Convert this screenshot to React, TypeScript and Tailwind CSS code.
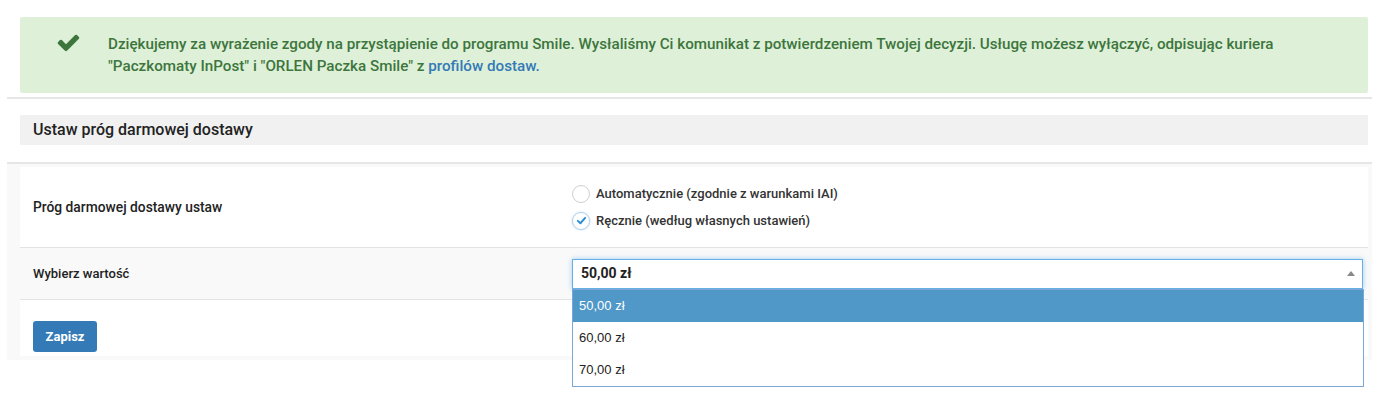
import { useState } from 'react';

const options = ['50,00 zł', '60,00 zł', '70,00 zł'];

function CheckIcon() {
  return (
    <svg viewBox="0 0 1792 1792" className="w-[25px] h-[25px] fill-[#3c763d]">
      <path d="M1671 566q0 40-28 68l-724 724-136 136q-28 28-68 28t-68-28l-136-136-362-362q-28-28-28-68t28-68l136-136q28-28 68-28t68 28l294 295 656-657q28-28 68-28t68 28l136 136q28 28 28 68z" />
    </svg>
  );
}

function Radio({ checked, label }: { checked: boolean; label: string }) {
  return (
    <label className="flex items-center gap-[6px] h-[27px] cursor-pointer">
      <span
        className={
          checked
            ? 'w-[18px] h-[18px] rounded-full border border-[#b9d3ea] bg-white flex items-center justify-center shadow-[0_0_2px_rgba(102,175,233,0.5)]'
            : 'w-[18px] h-[18px] rounded-full border border-[#cfcfcf] bg-white'
        }
      >
        {checked && (
          <svg viewBox="0 0 12 12" className="w-[11px] h-[11px]">
            <path d="M2 6.4 L4.8 9 L10 3.2" fill="none" stroke="#2d8fd5" strokeWidth="2.2" strokeLinecap="round" strokeLinejoin="round" />
          </svg>
        )}
      </span>
      <span className="text-[13px] font-medium text-[#333]">{label}</span>
    </label>
  );
}

export default function App() {
  const [mode, setMode] = useState('manual');
  const [value] = useState(options[0]);

  return (
    <div className="w-[1390px] h-[397px] bg-white font-['Roboto',sans-serif] text-[#333]">
      <div className="w-[1365px] ml-[7px] pt-[17px]">
        {/* success alert */}
        <div className="ml-[13px] w-[1348px] h-[76px] bg-[#dff0d8] rounded-[2px] flex items-start">
          <div className="w-[88px] pl-[36px] pt-[13px]">
            <CheckIcon />
          </div>
          <p className="w-[1180px] pt-[16px] text-[15.2px] leading-[22px] font-medium text-[#3c763d]">
            Dziękujemy za wyrażenie zgody na przystąpienie do programu Smile. Wysłaliśmy Ci komunikat z potwierdzeniem Twojej decyzji. Usługę możesz wyłączyć, odpisując kuriera "Paczkomaty InPost" i "ORLEN Paczka Smile" z{' '}
            <a href="#" className="text-[#337ab7]">profilów dostaw.</a>
          </p>
        </div>

        <div className="mt-[4px] h-[2px] bg-[#e6e6e6]" />

        {/* section header */}
        <div className="mt-[16px] ml-[13px] w-[1348px] h-[30px] bg-[#f1f1f1] flex items-center px-[13px]">
          <h2 className="text-[16px] font-medium text-[#222]">Ustaw próg darmowej dostawy</h2>
        </div>

        {/* form panel */}
        <div className="mt-[17px] border-t-2 border-[#e6e6e6] bg-[#f9f9f9] pl-[13px] pr-[4px] pt-[3px] pb-[4px]">
          <div className="h-[81px] bg-white border-b border-[#e3e3e3] grid grid-cols-[552px_1fr] items-center">
            <div className="pl-[13px] text-[13.8px] font-medium text-[#222]">Próg darmowej dostawy ustaw</div>
            <div className="flex flex-col" onClick={() => setMode(mode === 'manual' ? 'auto' : 'manual')}>
              <Radio checked={mode === 'auto'} label="Automatycznie (zgodnie z warunkami IAI)" />
              <Radio checked={mode === 'manual'} label="Ręcznie (według własnych ustawień)" />
            </div>
          </div>

          <div className="h-[52px] border-b border-[#e3e3e3] grid grid-cols-[552px_1fr] items-center">
            <div className="pl-[13px] text-[13px] font-medium text-[#222]">Wybierz wartość</div>
            <div className="relative pr-[5px]">
              <div className="h-[30px] bg-white border border-[#66afe9] shadow-[0_0_5px_rgba(102,175,233,0.6)] flex items-center justify-between pl-[8px] pr-[7px]">
                <span className="text-[14px] font-bold text-[#222]">{value}</span>
                <span className="w-0 h-0 border-l-[4px] border-r-[4px] border-b-[5px] border-l-transparent border-r-transparent border-b-[#888]" />
              </div>
              <ul className="absolute left-0 right-[4px] top-[30px] bg-white border border-[#7aa8d2] z-10 font-['Liberation_Sans',sans-serif]">
                {options.map((o) => (
                  <li
                    key={o}
                    className={
                      o === value
                        ? 'h-[32px] flex items-center px-[6px] text-[13px] bg-[#4f98c8] text-white'
                        : 'h-[32px] flex items-center px-[6px] text-[13px] text-[#222]'
                    }
                  >
                    {o}
                  </li>
                ))}
              </ul>
            </div>
          </div>

          <div className="h-[56px] bg-white pl-[13px] pt-[21px]">
            <button className="w-[64px] h-[31px] bg-[#337ab7] text-white text-[13px] font-bold rounded-[3px]">Zapisz</button>
          </div>
        </div>
      </div>
    </div>
  );
}
